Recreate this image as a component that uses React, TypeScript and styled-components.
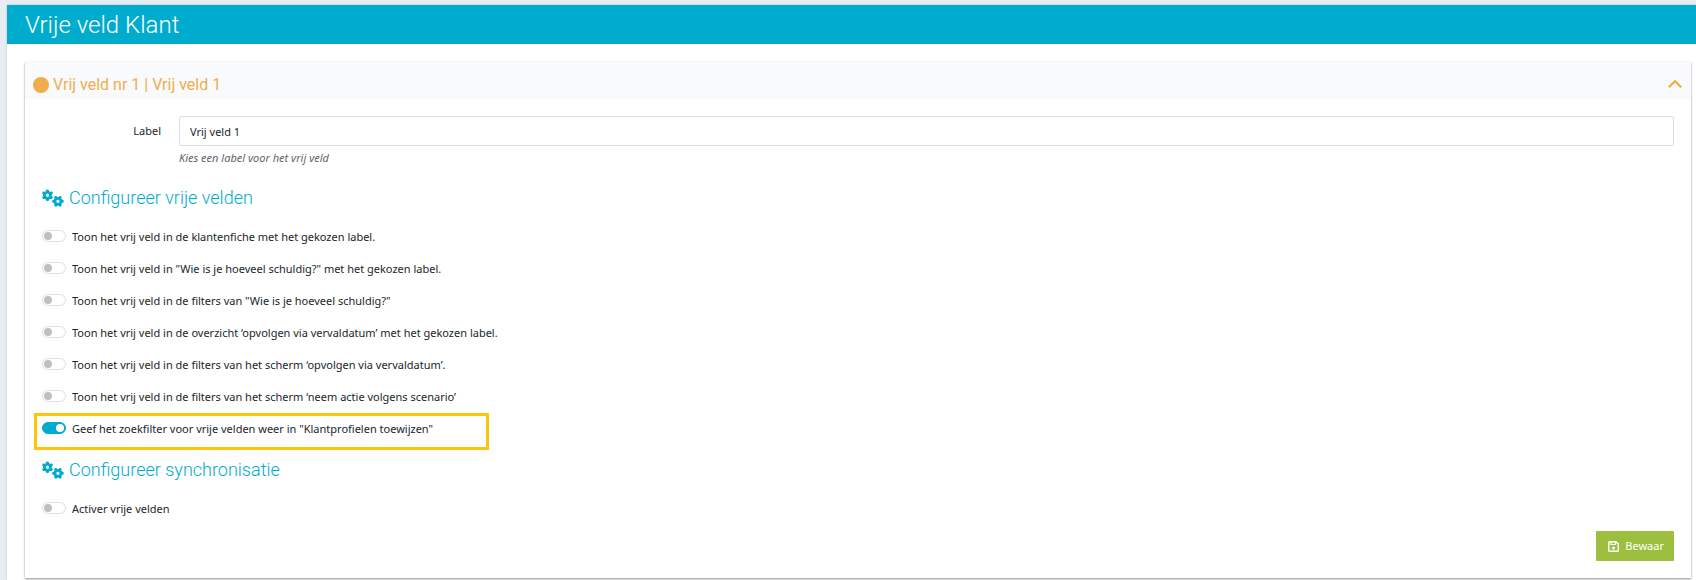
import React, { useId, useState } from "react";
import styled, { createGlobalStyle } from "styled-components";
import { FaGears } from "react-icons/fa6";

const bodyFont = `"Noto Sans", "Open Sans", sans-serif`;
const headingFont = `Roboto, "Liberation Sans", sans-serif`;

const GlobalStyle = createGlobalStyle`
  *, *::before, *::after { box-sizing: border-box; }
  body {
    margin: 0;
    background: #e9edf3;
    color: #212529;
    font-family: ${bodyFont};
    font-size: 11px;
    line-height: 16px;
  }
`;

const Page = styled.div`
  min-height: 100vh;
  padding: 5px 0 0 7px;
  display: flex;
  flex-direction: column;
`;

const Surface = styled.main`
  flex: 1;
  background: #fff;
  box-shadow: 0 0 2px #b4bcc4;
`;

const TitleBar = styled.header`
  background: #00accd;
  padding: 2px 18px 0;
`;

const PageTitle = styled.h1`
  margin: 0;
  color: #fff;
  font: 300 24px/37px ${headingFont};
`;

const Panel = styled.section`
  margin: 18px 5px 0 18px;
  background: #fff;
  box-shadow: 0 1px 2px #8c8c8c;
`;

const PanelHeader = styled.button`
  display: flex;
  align-items: center;
  width: 100%;
  height: 37px;
  padding: 8px 9px 0 8px;
  border: 0;
  background: #f9fafc;
  color: #f0ad4e;
  font: 400 16px/20px ${headingFont};
  text-align: left;
  cursor: pointer;
`;

const Dot = styled.span`
  width: 16px;
  height: 16px;
  margin-right: 4px;
  border-radius: 50%;
  background: currentColor;
`;

const Chevron = styled.svg<{ $open: boolean }>`
  margin-left: auto;
  transform: ${(p) => (p.$open ? "none" : "rotate(180deg)")};
`;

const PanelBody = styled.form`
  padding: 17px;
`;

const Field = styled.div`
  display: grid;
  grid-template-columns: 119px 1fr;
  column-gap: 18px;
  row-gap: 5px;
  align-items: center;
`;

const FieldLabel = styled.label`
  text-align: right;
`;

const TextInput = styled.input`
  width: 100%;
  height: 30px;
  padding: 0 10px;
  border: 1px solid #dbdfe4;
  border-radius: 2px;
  background: #fff;
  color: inherit;
  font: inherit;
`;

const Help = styled.small`
  grid-column: 2;
  color: #5f666d;
  font-size: 11px;
  line-height: 14px;
  font-style: italic;
`;

const SectionTitle = styled.h2`
  display: flex;
  align-items: center;
  gap: 5px;
  margin: 21px 0 18px;
  color: #00accd;
  font: 300 18px/24px ${headingFont};
`;

const Options = styled.div`
  display: flex;
  flex-direction: column;
  align-items: flex-start;
  gap: 16px;
  padding-bottom: 1px;
`;

const Option = styled.label<{ $marked?: boolean }>`
  position: relative;
  display: flex;
  align-items: center;
  gap: 6px;
  cursor: pointer;

  ${(p) =>
    p.$marked &&
    `&::after {
      content: "";
      position: absolute;
      top: -7px;
      left: -8px;
      width: 455px;
      height: 37px;
      border: 3px solid #fdc50c;
      pointer-events: none;
    }`}
`;

const OptionText = styled.span`
  padding-top: 2px;
  line-height: 14px;
`;

const Switch = styled.input`
  appearance: none;
  display: flex;
  align-items: center;
  width: 24px;
  height: 12px;
  margin: 0;
  padding: 0 1px;
  border: 1px solid #dcdfe3;
  border-radius: 6px;
  background: #fff;
  cursor: pointer;

  &::before {
    content: "";
    width: 8px;
    height: 8px;
    border-radius: 50%;
    background: #bfbfbf;
  }

  &:checked {
    justify-content: flex-end;
    border-color: #00accd;
    background: #00accd;
  }

  &:checked::before {
    background: #fff;
  }
`;

const Actions = styled.div`
  display: flex;
  justify-content: flex-end;
  margin-top: 14px;
`;

const SaveButton = styled.button`
  display: flex;
  align-items: center;
  gap: 6px;
  height: 30px;
  padding: 0 10px 0 12px;
  border: 0;
  border-radius: 1px;
  background: #9dbf3f;
  color: #fff;
  font: 11px/16px ${bodyFont};
  cursor: pointer;
`;

const options = [
  { text: "Toon het vrij veld in de klantenfiche met het gekozen label." },
  { text: 'Toon het vrij veld in "Wie is je hoeveel schuldig?" met het gekozen label.' },
  { text: 'Toon het vrij veld in de filters van "Wie is je hoeveel schuldig?"' },
  { text: "Toon het vrij veld in de overzicht ‘opvolgen via vervaldatum’ met het gekozen label." },
  { text: "Toon het vrij veld in de filters van het scherm ‘opvolgen via vervaldatum’." },
  { text: "Toon het vrij veld in de filters van het scherm ‘neem actie volgens scenario’" },
  { text: 'Geef het zoekfilter voor vrije velden weer in "Klantprofielen toewijzen"', on: true, marked: true },
];

function Toggle({ text, on, marked }: { text: string; on?: boolean; marked?: boolean }) {
  return (
    <Option $marked={marked}>
      <Switch type="checkbox" role="switch" defaultChecked={on} />
      <OptionText>{text}</OptionText>
    </Option>
  );
}

function SectionHeading({ children }: { children: React.ReactNode }) {
  return (
    <SectionTitle>
      <FaGears size={22} aria-hidden />
      {children}
    </SectionTitle>
  );
}

function SaveIcon() {
  return (
    <svg width="11" height="11" viewBox="0 0 11 11" fill="none" stroke="currentColor" aria-hidden>
      <path d="M1.6.7h6.3l2.4 2.4v6.3a.9.9 0 0 1-.9.9H1.6a.9.9 0 0 1-.9-.9V1.6a.9.9 0 0 1 .9-.9Z" strokeWidth="1.4" />
      <path d="M2.9.7v2.8h4.4V.7" strokeWidth="1.2" />
      <circle cx="5.5" cy="6.9" r="1.5" fill="currentColor" stroke="none" />
    </svg>
  );
}

export default function App() {
  const [open, setOpen] = useState(true);
  const labelId = useId();

  return (
    <>
      <GlobalStyle />
      <Page>
        <Surface>
          <TitleBar>
            <PageTitle>Vrije veld Klant</PageTitle>
          </TitleBar>
          <Panel>
            <PanelHeader type="button" aria-expanded={open} onClick={() => setOpen(!open)}>
              <Dot />
              Vrij veld nr 1 | Vrij veld 1
              <Chevron $open={open} width="14" height="9" viewBox="0 0 14 9" aria-hidden>
                <path d="M.8 7.3 7 1.1l6.2 6.2" fill="none" stroke="currentColor" strokeWidth="2.2" />
              </Chevron>
            </PanelHeader>
            {open && (
              <PanelBody onSubmit={(e) => e.preventDefault()}>
                <Field>
                  <FieldLabel htmlFor={labelId}>Label</FieldLabel>
                  <TextInput id={labelId} defaultValue="Vrij veld 1" />
                  <Help>Kies een label voor het vrij veld</Help>
                </Field>
                <SectionHeading>Configureer vrije velden</SectionHeading>
                <Options>
                  {options.map((o) => (
                    <Toggle key={o.text} {...o} />
                  ))}
                </Options>
                <SectionHeading>Configureer synchronisatie</SectionHeading>
                <Options>
                  <Toggle text="Activer vrije velden" />
                </Options>
                <Actions>
                  <SaveButton type="submit">
                    <SaveIcon />
                    Bewaar
                  </SaveButton>
                </Actions>
              </PanelBody>
            )}
          </Panel>
        </Surface>
      </Page>
    </>
  );
}
